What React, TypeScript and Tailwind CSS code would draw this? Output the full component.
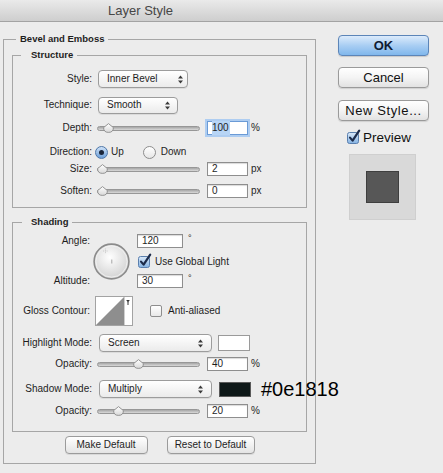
import React from 'react';

// Photoshop "Layer Style" dialog — Bevel and Emboss pane

const Label = ({ children, className = 'w-[79px]' }: { children: React.ReactNode; className?: string }) => (
  <div className={`${className} shrink-0 text-right`}>{children}</div>
);

const UpDown = () => (
  <svg width="5" height="9" viewBox="0 0 5 9" className="shrink-0">
    <path d="M0 3.6 L2.5 0.6 L5 3.6 Z" fill="#3a3a3a" />
    <path d="M0 5.4 L2.5 8.4 L5 5.4 Z" fill="#3a3a3a" />
  </svg>
);

const Select = ({ value, className }: { value: string; className: string }) => (
  <div
    className={`${className} flex shrink-0 items-center justify-between rounded-[4px] border border-[#9c9c9c] bg-linear-to-b from-white to-[#ebebeb] pl-[8px] shadow-[0_1px_0_rgba(0,0,0,0.07)]`}
  >
    <span>{value}</span>
    <UpDown />
  </div>
);

const NumField = ({ value, className = 'ml-[7px] w-[41px]', focus = false }: { value: string; className?: string; focus?: boolean }) => (
  <div
    className={`${className} flex h-[14px] shrink-0 items-center bg-white pl-[4px] ${
      focus
        ? 'border border-[#6b9bd6] shadow-[0_0_0_2px_#aecdf1]'
        : 'border border-[#8e8e8e] shadow-[inset_0_1px_1px_rgba(0,0,0,0.15)]'
    }`}
  >
    {focus ? <span className="bg-[#b7d5f6] pr-[1px]">{value}</span> : value}
  </div>
);

const Slider = ({ thumb }: { thumb: string }) => (
  <div className="relative ml-[5px] h-[10px] w-[103px] shrink-0">
    <div className="absolute left-0 right-0 top-[3px] h-[5px] rounded-full border border-[#979797] bg-linear-to-b from-[#a6a6a6] to-[#d9d9d9]" />
    <svg className={`absolute top-0 ${thumb}`} width="11" height="10" viewBox="0 0 11 10">
      <defs>
        <linearGradient id="thumbFill" x1="0" y1="0" x2="0" y2="1">
          <stop offset="0" stopColor="#ffffff" />
          <stop offset="1" stopColor="#d8d8d8" />
        </linearGradient>
      </defs>
      <path d="M5.5 0.6 L10.4 4.6 Q10.4 9.4 5.5 9.4 Q0.6 9.4 0.6 4.6 Z" fill="url(#thumbFill)" stroke="#8a8a8a" strokeWidth="0.9" />
    </svg>
  </div>
);

const Radio = ({ on, className }: { on?: boolean; className: string }) =>
  on ? (
    <div className={`${className} flex h-[13px] w-[13px] shrink-0 items-center justify-center rounded-full border border-[#4f77a8] bg-linear-to-b from-[#cfe2f7] to-[#6d9fd8]`}>
      <div className="h-[5px] w-[5px] rounded-full bg-[#1a2538]" />
    </div>
  ) : (
    <div className={`${className} h-[13px] w-[13px] shrink-0 rounded-full border border-[#8d8d8d] bg-linear-to-b from-white to-[#e6e6e6]`} />
  );

const CheckOn = ({ className }: { className: string }) => (
  <svg className={`${className} shrink-0`} width="15" height="15" viewBox="0 0 15 15">
    <defs>
      <linearGradient id="checkFill" x1="0" y1="0" x2="0" y2="1">
        <stop offset="0" stopColor="#dae9f9" />
        <stop offset="1" stopColor="#84b2e2" />
      </linearGradient>
    </defs>
    <rect x="0.5" y="3.5" width="11" height="11" rx="2" fill="url(#checkFill)" stroke="#5a7fae" />
    <path d="M3 8.6 L5.6 11.6 L12.2 1.6" fill="none" stroke="#1c2b4a" strokeWidth="2.2" strokeLinecap="round" strokeLinejoin="round" />
  </svg>
);

const CheckOff = ({ className }: { className: string }) => (
  <div className={`${className} h-[12px] w-[12px] shrink-0 rounded-[2px] border border-[#8e8e8e] bg-linear-to-b from-white to-[#e8e8e8]`} />
);

const Dial = () => (
  <svg className="ml-[3px] shrink-0" width="37" height="37" viewBox="0 0 37 37">
    <defs>
      <radialGradient id="dialFill" cx="45%" cy="38%" r="62%">
        <stop offset="0" stopColor="#ffffff" />
        <stop offset="1" stopColor="#d2d2d2" />
      </radialGradient>
    </defs>
    <circle cx="18.5" cy="18.5" r="17.4" fill="url(#dialFill)" stroke="#8b8b8b" strokeWidth="1.6" />
    <circle cx="18.5" cy="18.5" r="15.6" fill="none" stroke="#f4f4f4" strokeWidth="0.8" />
    <path d="M12.5 5.5 v5 M10 8 h5" stroke="#c4c4c4" strokeWidth="0.8" strokeDasharray="1 0.8" />
    <path d="M18.8 16.5 v4" stroke="#9c9c9c" strokeWidth="0.9" />
  </svg>
);

const Contour = () => (
  <svg className="ml-[5px] shrink-0" width="38" height="30" viewBox="0 0 38 30">
    <rect x="0.5" y="0.5" width="37" height="29" fill="#ffffff" stroke="#a3a3a3" />
    <path d="M1 29 L29 1 L29 29 Z" fill="#8e8e8e" />
    <path d="M29.5 1 v28" stroke="#cfcfcf" />
    <path d="M31.2 4 h3.6 l-1.8 2.6 Z" fill="#333333" />
    <path d="M33 6 v3" stroke="#333333" strokeWidth="1" />
  </svg>
);

const SmallButton = ({ children, className }: { children: React.ReactNode; className: string }) => (
  <div
    className={`${className} flex h-[18px] items-center justify-center rounded-[4px] border border-[#9b9b9b] bg-linear-to-b from-white to-[#e4e4e4] shadow-[0_1px_0_rgba(0,0,0,0.08)]`}
  >
    {children}
  </div>
);

const DialogButton = ({ children, className }: { children: React.ReactNode; className: string }) => (
  <div
    className={`${className} flex h-[21px] w-full items-center justify-center rounded-[4px] border border-[#9a9a9a] bg-linear-to-b from-white via-[#f4f4f4] to-[#e2e2e2] text-[13px] text-[#111] shadow-[0_1px_1px_rgba(0,0,0,0.12)]`}
  >
    {children}
  </div>
);

export default function App() {
  return (
    <div className="relative h-[473px] w-[443px] overflow-hidden bg-[#ececec] font-['Liberation_Sans',Arial,sans-serif] text-[10px] leading-[14px] text-[#1e1e1e]">
      {/* Title bar */}
      <div className="flex h-[22px] items-center border-b border-[#a3a3a3] bg-linear-to-b from-[#eaeaea] to-[#cecece] pl-[108px] text-[13px] text-[#464646]">
        Layer Style
      </div>

      <div className="flex items-start">
        {/* Bevel and Emboss */}
        <fieldset className="ml-[3px] mt-[10px] w-[313px] min-w-0 shrink-0 border border-[#a6a6a6] pb-[9px]">
          <legend className="ml-[12px] px-[4px] text-[9.5px] font-bold leading-[14px]">Bevel and Emboss</legend>

          {/* Structure */}
          <fieldset className="mx-[8px] mt-[2px] min-w-0 border border-[#a6a6a6] pb-[8px]">
            <legend className="ml-[8px] pl-[10px] pr-[4px] text-[9.5px] font-bold leading-[14px]">Structure</legend>

            <div className="mt-[8px] flex h-[18px] items-center">
              <Label>Style:</Label>
              <Select value="Inner Bevel" className="ml-[6px] h-[18px] w-[90px] pr-[4px]" />
            </div>

            <div className="mt-[8px] flex h-[18px] items-center">
              <Label>Technique:</Label>
              <Select value="Smooth" className="ml-[6px] h-[17px] w-[80px] pr-[7px]" />
            </div>

            <div className="mt-[6px] flex h-[16px] items-center">
              <Label>Depth:</Label>
              <Slider thumb="left-[6px]" />
              <NumField value="100" focus />
              <span className="ml-[3px]">%</span>
            </div>

            <div className="mt-[9px] flex h-[14px] items-center">
              <Label>Direction:</Label>
              <Radio on className="ml-[3px]" />
              <span className="ml-[3px]">Up</span>
              <Radio className="ml-[19px]" />
              <span className="ml-[5px]">Down</span>
            </div>

            <div className="mt-[2px] flex h-[16px] items-center">
              <Label>Size:</Label>
              <Slider thumb="left-[0px]" />
              <NumField value="2" />
              <span className="ml-[3px]">px</span>
            </div>

            <div className="mt-[6px] flex h-[16px] items-center">
              <Label>Soften:</Label>
              <Slider thumb="left-[0px]" />
              <NumField value="0" />
              <span className="ml-[3px]">px</span>
            </div>
          </fieldset>

          {/* Shading */}
          <fieldset className="mx-[8px] mt-[7px] min-w-0 border border-[#a6a6a6] pb-[12px]">
            <legend className="ml-[9px] pl-[9px] pr-[4px] text-[9.5px] font-bold leading-[14px]">Shading</legend>

            <div className="mt-[5px] flex h-[54px] items-center">
              <div className="flex h-full w-[77px] shrink-0 flex-col justify-between text-right">
                <div>Angle:</div>
                <div>Altitude:</div>
              </div>
              <Dial />
              <div className="ml-[7px] flex h-full flex-col">
                <div className="flex items-start">
                  <NumField value="120" className="w-[46px]" />
                  <span className="-mt-[3px] ml-[5px] text-[9px]">°</span>
                </div>
                <div className="mt-[7px] flex h-[13px] items-center">
                  <CheckOn className="-mt-[3px] ml-[1px]" />
                  <span className="ml-[2px]">Use Global Light</span>
                </div>
                <div className="mt-[6px] flex items-start">
                  <NumField value="30" className="w-[46px]" />
                  <span className="-mt-[3px] ml-[5px] text-[9px]">°</span>
                </div>
              </div>
            </div>

            <div className="mt-[8px] flex h-[30px] items-center">
              <Label className="w-[77px]">Gloss Contour:</Label>
              <Contour />
              <CheckOff className="ml-[17px]" />
              <span className="ml-[6px]">Anti-aliased</span>
            </div>

            <div className="mt-[8px] flex h-[18px] items-center">
              <Label>Highlight Mode:</Label>
              <Select value="Screen" className="ml-[7px] h-[18px] w-[113px] pr-[8px]" />
              <div className="ml-[6px] h-[16px] w-[32px] shrink-0 border border-[#9a9a9a] bg-white" />
            </div>

            <div className="mt-[4px] flex h-[16px] items-center">
              <Label>Opacity:</Label>
              <Slider thumb="left-[36px]" />
              <NumField value="40" />
              <span className="ml-[3px]">%</span>
            </div>

            <div className="mt-[8px] flex h-[18px] items-center">
              <Label>Shadow Mode:</Label>
              <Select value="Multiply" className="ml-[7px] h-[18px] w-[113px] pr-[8px]" />
              <div className="ml-[7px] h-[15px] w-[32px] shrink-0 border border-[#5a5a5a] bg-[#0e1818]" />
              <span className="ml-[10px] shrink-0 whitespace-nowrap text-[20px] leading-none text-black">#0e1818</span>
            </div>

            <div className="mt-[5px] flex h-[16px] items-center">
              <Label>Opacity:</Label>
              <Slider thumb="left-[16px]" />
              <NumField value="20" />
              <span className="ml-[3px]">%</span>
            </div>
          </fieldset>

          <div className="mt-[4px] flex justify-center gap-[19px]">
            <SmallButton className="w-[83px]">Make Default</SmallButton>
            <SmallButton className="w-[88px]">Reset to Default</SmallButton>
          </div>
        </fieldset>

        {/* Right column */}
        <div className="ml-[22px] mt-[13px] flex w-[91px] shrink-0 flex-col">
          <div className="flex h-[21px] w-full items-center justify-center rounded-[4px] border border-[#5c85b8] bg-linear-to-b from-[#dcebfb] via-[#a9cef3] to-[#80b7ec] text-[13px] font-bold text-[#0f1c33] shadow-[0_1px_1px_rgba(0,0,0,0.15)]">
            OK
          </div>
          <DialogButton className="mt-[11px]">Cancel</DialogButton>
          <DialogButton className="mt-[12px] tracking-[0.6px]">New Style...</DialogButton>

          <div className="mt-[10px] flex h-[14px] items-center">
            <CheckOn className="-mt-[3px] ml-[9px]" />
            <span className="ml-[1px] text-[13.5px] text-[#111]">Preview</span>
          </div>

          <div className="ml-[11px] mt-[9px] flex h-[66px] w-[67px] items-center justify-center border border-[#cfcfcf] bg-[#d9d9d9]">
            <div className="h-[32px] w-[33px] border border-[#3e3e3e] bg-[#575757]" />
          </div>
        </div>
      </div>
    </div>
  );
}
